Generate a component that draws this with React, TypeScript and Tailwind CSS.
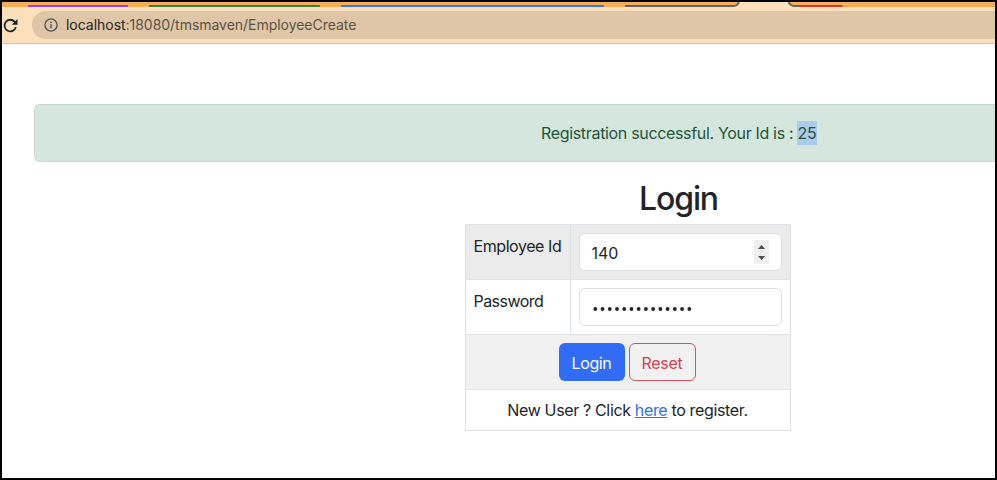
import React from 'react';

function BrowserBar() {
  return (
    <header className="relative h-[42px] shrink-0 border-b border-[#d8c3a9] bg-[#fcdfbb]">
      <div className="relative flex h-[5px] w-full bg-[#f8ae56]">
        <div className="ml-[26px] mt-[3px] h-[2px] w-[100px] rounded-t-[1px] bg-[#9440f5]" />
        <div className="ml-[21px] mt-[3px] h-[2px] w-[171px] rounded-t-[1px] bg-[#397f3e]" />
        <div className="ml-[21px] mt-[3px] h-[2px] w-[263px] rounded-t-[1px] bg-[#3b72e8]" />
        <svg className="absolute left-[622px] top-0" width="222" height="6" viewBox="0 0 222 6" fill="none">
          <path d="M114.5 0C114 3 112.500 4 109 4L109 6H170.500V4C167 4 166 3 164.500 0Z" fill="#fcdfbb" />
          <path d="M1 4H109C112.500 4 114 3 115 0" stroke="#5f6368" strokeWidth="1.800" />
          <path d="M164.500 0C166 3 167.500 4 171 4H175" stroke="#5f6368" strokeWidth="1.800" />
          <path d="M175 4H218.500" stroke="#d93530" strokeWidth="2" />
        </svg>
      </div>
      <div className="flex pt-1">
        <svg className="ml-px mt-[7px] shrink-0" width="16" height="15" viewBox="0 0 16 15" fill="none">
          <path d="M12.900 9.200A5.800 5.800 0 1 1 11.600 3.600L13 5" stroke="#222" strokeWidth="1.800" />
          <path d="M14.500 1V6.700H8.800Z" fill="#222" />
        </svg>
        <div className="ml-[13px] flex h-7 flex-1 items-center rounded-l-full bg-[#dec6a7] pl-3">
          <svg width="14" height="14" viewBox="0 0 14 14" fill="none" stroke="#53565a">
            <circle cx="7" cy="7" r="6.100" strokeWidth="1.400" />
            <path d="M7 6.200V10.300M7 3.700V5.100" strokeWidth="1.500" />
          </svg>
          <span className="ml-[8px] whitespace-nowrap text-[14px] leading-5 tracking-[-0.03px] text-[#5c5348]">
            <span className="text-[#2a2520]">localhost</span>:18080/tmsmaven/EmployeeCreate
          </span>
        </div>
      </div>
    </header>
  );
}

function LoginTable() {
  return (
    <div className="ml-[463px] mt-[5px] w-[326px] border border-[#dee2e6]">
      <div className="flex h-[55px] border-b border-[#dee2e6] bg-[#ebebeb]">
        <div className="w-[104px] whitespace-nowrap pl-[7.5px] pt-[9px] tracking-[-0.43px]">Employee Id</div>
        <div className="flex-1 border-l border-[#dee2e6] p-2">
          <div className="flex h-[38px] items-center justify-between rounded-md border border-[#dadfe4] bg-white pl-[11.5px] pr-3">
            <span className="pt-px">140</span>
            <span className="flex h-6 w-[15px] flex-col items-center justify-center gap-[7px] bg-[#efefef]">
              <svg width="7" height="4" viewBox="0 0 7 4"><path d="M0 4L3.500 0L7 4Z" fill="#4d4d4d" /></svg>
              <svg width="7" height="4" viewBox="0 0 7 4"><path d="M0 0L3.500 4L7 0Z" fill="#4d4d4d" /></svg>
            </span>
          </div>
        </div>
      </div>
      <div className="flex h-[55px] border-b border-[#dee2e6]">
        <div className="w-[104px] whitespace-nowrap pl-[7.5px] pt-[9px] tracking-[-0.55px]">Password</div>
        <div className="flex-1 border-l border-[#dee2e6] p-2">
          <div className="flex h-[38px] items-center rounded-md border border-[#dadfe4] bg-white pl-[13px] pt-[3px]">
            <svg width="100" height="4" viewBox="0 0 100 4" fill="#212529">
              {Array.from({ length: 14 }, (_, i) => (
                <circle key={i} cx={2.3 + i * 7.23} cy="2" r="1.900" />
              ))}
            </svg>
          </div>
        </div>
      </div>
      <div className="flex h-[55px] justify-center gap-1 border-b border-[#dee2e6] bg-[#f1f1f1] pr-[2px] pt-2">
        <button className="h-[38px] w-[66px] rounded-md bg-[#306cf5] pt-px tracking-[-0.4px] text-white">Login</button>
        <button className="h-[38px] w-[67px] rounded-md border border-[#d4525d] pt-px tracking-[-0.3px] text-[#cf4450]">Reset</button>
      </div>
      <div className="h-[40px] whitespace-nowrap pr-px pt-[8px] text-center tracking-[-0.35px]">
        New User ? Click <a className="text-[#306cf5] underline">here</a> to register.
      </div>
    </div>
  );
}

export default function App() {
  return (
    <div className="flex h-[480px] w-[997px] flex-col overflow-hidden border-2 border-black bg-white font-['Inter',sans-serif] text-[16px] leading-6 text-[#212529]">
      <BrowserBar />
      <main>
        <div className="ml-8 mt-[60px] h-[58px] whitespace-nowrap rounded-l-md border border-r-0 border-[#c3dcd0] bg-[#d4e6dd] pl-[506px] pt-4 tracking-[-0.33px] text-[#24543a]">
          Registration successful. Your Id is : <span className="inline-block bg-[#abcbee] tracking-[-0.1px]">25</span>
        </div>
        <h1 className="ml-[463px] mt-[17px] w-[427px] text-center text-[32px] font-medium leading-10 tracking-[-1.1px]">Login</h1>
        <LoginTable />
      </main>
    </div>
  );
}
